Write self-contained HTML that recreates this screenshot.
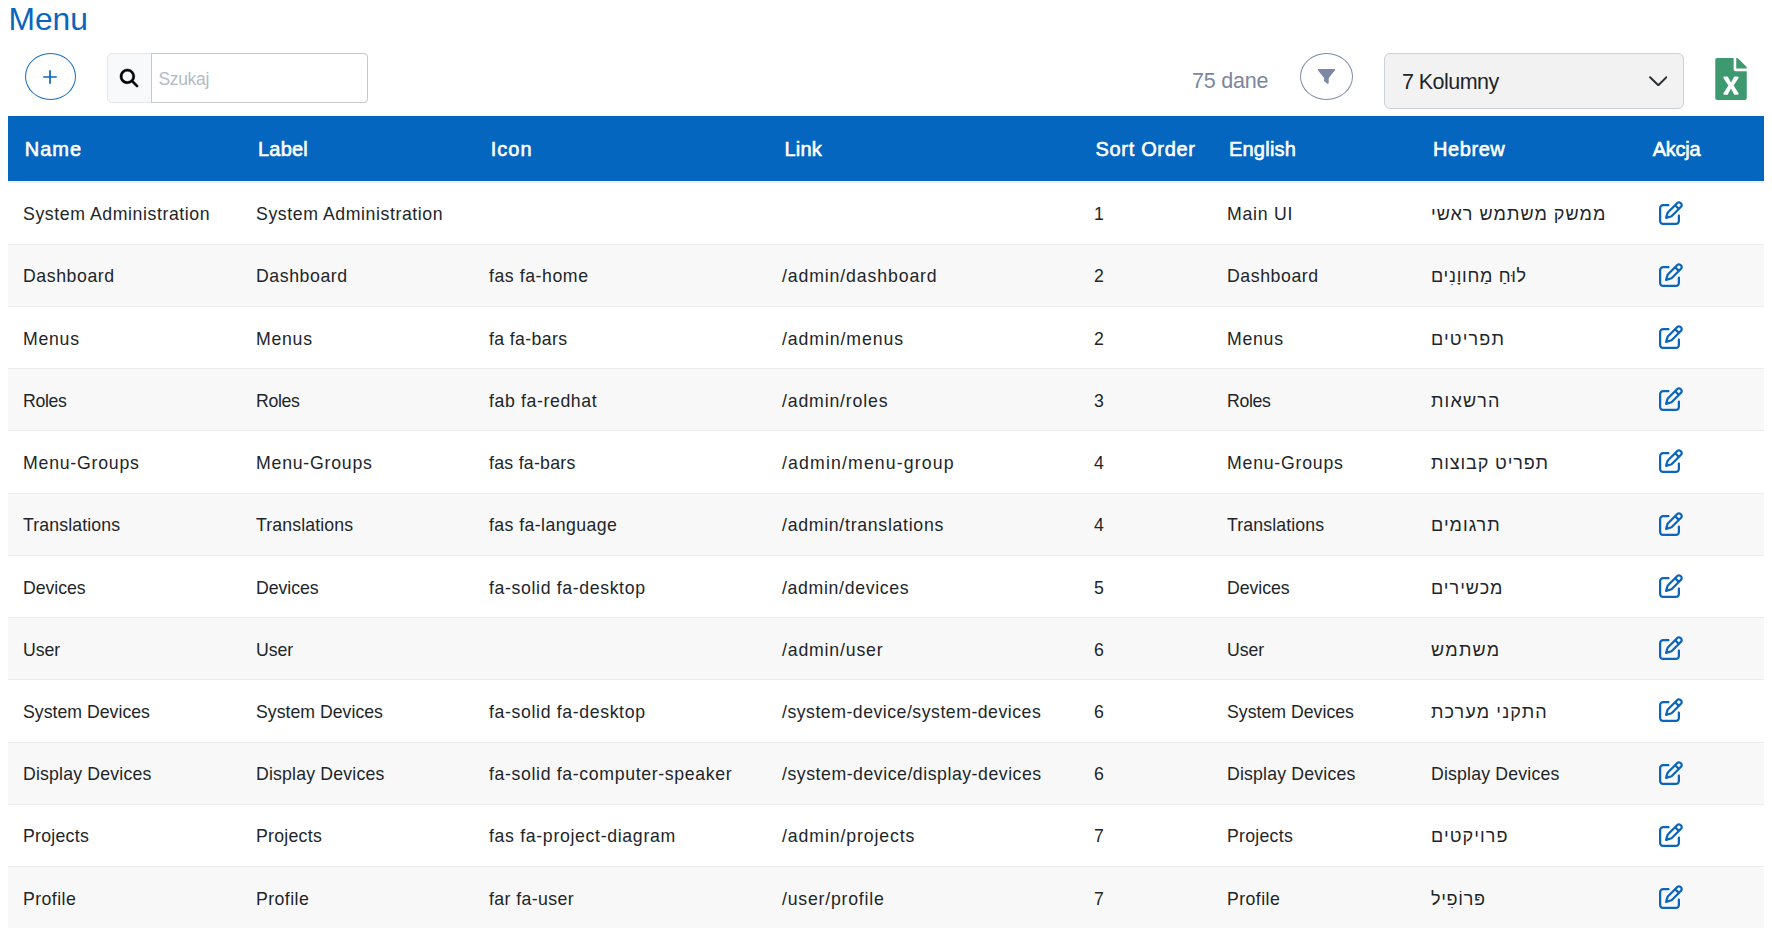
<!DOCTYPE html>
<html lang="pl">
<head>
<meta charset="utf-8">
<title>Menu</title>
<style>
*{box-sizing:border-box;margin:0;padding:0}
html,body{width:1772px;height:928px;overflow:hidden;background:#fff}
body{font-family:"Liberation Sans",sans-serif;color:#212529;position:relative}
.abs{position:absolute}
h1{position:absolute;left:8.400px;top:-0.700px;font-weight:400;font-size:31.800px;line-height:40px;color:#0a65bd;letter-spacing:0;white-space:nowrap;font-family:"Liberation Sans",sans-serif}
.addbtn{left:25px;top:53px;width:51px;height:47px;border:1.4px solid #1a6dc0;border-radius:50%;background:#fff}
.addbtn svg{position:absolute;left:17px;top:15.6px}
.sgrp{left:107px;top:53px;width:260.500px;height:50px;border:1px solid #e3e6ea;border-radius:5px;background:#f8f9fa}
.sgrp .inp{position:absolute;left:43px;top:-1px;width:217px;height:50px;border:1px solid #c7c8cb;border-radius:0 4px 4px 0;background:#fff}
.sgrp .ph{position:absolute;left:6.500px;top:14px;font-size:17.500px;line-height:22px;color:#b3bac8;white-space:nowrap;letter-spacing:-0.350px}
.sgrp svg{position:absolute;left:12.300px;top:14.800px}
.count{left:1192px;top:67px;font-size:21.500px;line-height:28px;color:#7d869c;white-space:nowrap;letter-spacing:-0.200px}
.fbtn{left:1300px;top:53px;width:53px;height:47px;border:1.300px solid #7f8aa6;border-radius:50%;background:#fff}
.fbtn svg{position:absolute;left:16.500px;top:14.200px}
.sel{left:1384px;top:53px;width:300px;height:55.800px;border:1px solid #ccd0d8;border-radius:6px;background:#f2f2f2}
.sel .t{position:absolute;left:17px;top:14.200px;font-size:21.500px;line-height:28px;color:#212529;white-space:nowrap;letter-spacing:-0.550px}
.sel svg{position:absolute;left:263.500px;top:21.800px}
.xls{left:1715.300px;top:58px}
table{position:absolute;left:8px;top:116px;width:1756px;border-collapse:collapse;table-layout:fixed}
th{height:65px;background:#0466be;color:#fff;font-family:"Liberation Sans",sans-serif;font-weight:400;-webkit-text-stroke:0.600px #fff;font-size:20px;line-height:24px;text-align:left;padding:0 0 0 16.500px;white-space:nowrap;vertical-align:middle;letter-spacing:-0.300px}
th span{position:relative;top:0.500px}
td{height:62.250px;padding:0 0 0 15px;font-family:"Liberation Sans",sans-serif;font-size:17.700px;line-height:22px;font-weight:400;color:#212529;letter-spacing:0.780px;text-align:left;white-space:nowrap;vertical-align:middle;border-bottom:1px solid #ececec;overflow:visible}
tbody tr:first-child td{height:63px;padding-top:2px}
td span{position:relative;top:0.500px}
tr.d1 td span{top:1.500px}
tbody tr:nth-child(even) td{background:#f8f8f8}
td.act{padding-left:22px}
td.act svg{display:block;position:relative;top:-0.500px}
.he{direction:rtl;unicode-bidi:embed;display:inline-block;font-size:18px}
</style>
</head>
<body>
<h1>Menu</h1>

<div class="abs addbtn">
<svg width="14" height="14" viewBox="0 0 14 14"><path d="M7 0.900V13.100M0.900 7H13.100" stroke="#0a65bd" stroke-width="1.700" stroke-linecap="round" fill="none"/></svg>
</div>

<div class="abs sgrp">
<svg width="18.200" height="18.200" viewBox="0 0 512 512" style="overflow:visible"><path fill="#000" stroke="#000" stroke-width="12" d="M416 208c0 45.900-14.900 88.300-40 122.700L502.600 457.400c12.500 12.500 12.500 32.800 0 45.300s-32.800 12.500-45.300 0L330.700 376c-34.400 25.200-76.800 40-122.700 40C93.100 416 0 322.900 0 208S93.100 0 208 0S416 93.100 416 208zM208 352a144 144 0 1 0 0-288 144 144 0 1 0 0 288z"/></svg>
<div class="inp"><div class="ph">Szukaj</div></div>
</div>

<div class="abs count">75 dane</div>

<div class="abs fbtn"></div>
<svg class="abs" style="left:1310px;top:62px" width="32" height="28" viewBox="1310 62 32 28"><path fill="#7c88a6" d="M1318.900 69.100H1334Q1335.900 69.100 1334.800 70.500L1328.700 78V83Q1328.700 84 1327.600 83.700L1326.600 83.300L1324.500 81.500Q1324.100 81.200 1324.100 80.700V78L1318.100 70.500Q1317 69.100 1318.900 69.100Z"/></svg>

<div class="abs sel">
<div class="t">7 Kolumny</div>
<svg width="18.600" height="10.600" viewBox="0 0 18.600 10.600"><path d="M1.100 1.200L9.300 9.300L17.500 1.200" stroke="#2b3035" stroke-width="2" fill="none" stroke-linecap="round" stroke-linejoin="round"/></svg>
</div>

<svg class="abs xls" width="32" height="42" viewBox="0 0 384 512"><path fill="#3d9970" d="M224 136V0H24C10.700 0 0 10.700 0 24v464c0 13.300 10.700 24 24 24h336c13.300 0 24-10.700 24-24V160H248c-13.200 0-24-10.800-24-24zm60.100 106.500L224 336l60.100 93.500c5.100 8-.6 18.500-10.100 18.500h-34.900c-4.400 0-8.500-2.400-10.600-6.300C208.900 405.500 192 373 192 373c-6.400 14.800-10 20-36.600 68.800-2.100 3.900-6.100 6.300-10.500 6.300H110c-9.500 0-15.200-10.500-10.100-18.500l60.300-93.500-60.300-93.500c-5.200-8 .6-18.500 10.100-18.500h34.800c4.400 0 8.500 2.400 10.600 6.300 26.100 48.800 20 33.600 36.600 68.500 0 0 6.100-11.700 36.600-68.500 2.100-3.900 6.200-6.300 10.600-6.300H274c9.500-.1 15.200 10.400 10.100 18.400zM384 121.900v6.100H256V0h6.100c6.400 0 12.500 2.500 17 7l97.900 98c4.500 4.500 7 10.600 7 16.900z"/></svg>

<div class="abs" style="left:8px;top:182px;width:1756px;height:1px;background:#f0f0f0"></div>
<table>
<colgroup><col style="width:233px"><col style="width:233px"><col style="width:293px"><col style="width:312px"><col style="width:133px"><col style="width:204px"><col style="width:221px"><col style="width:127px"></colgroup>
<thead><tr><th><span style="letter-spacing:0.97px;left:0.3px">Name</span></th><th><span style="letter-spacing:0.2px;left:0.5px">Label</span></th><th><span style="letter-spacing:1px;left:0.3px">Icon</span></th><th><span style="letter-spacing:0.17px;left:1px">Link</span></th><th><span style="letter-spacing:0.68px">Sort Order</span></th><th><span style="letter-spacing:0.25px;left:0.4px">English</span></th><th><span style="letter-spacing:0.58px;left:0.5px">Hebrew</span></th><th><span style="letter-spacing:-0.3px;left:-0.7px">Akcja</span></th></tr></thead>
<tbody id="tb">
<tr><td><span style="letter-spacing:0.580px">System Administration</span></td><td><span style="letter-spacing:0.580px">System Administration</span></td><td></td><td></td><td><span>1</span></td><td><span style="letter-spacing:0.747px">Main UI</span></td><td><span class="he" style="letter-spacing:1.036px">ממשק משתמש ראשי</span></td><td class="act"><svg width="24" height="24" viewBox="0 0 512 512"><path fill="#0a65bd" d="M441 58.900L453.100 71c9.400 9.400 9.400 24.600 0 33.900L424 134.100 377.900 88 407 58.900c9.400-9.400 24.600-9.400 33.900 0zM209.800 256.200L344 121.900 390.100 168 255.800 302.200c-2.900 2.900-6.500 5-10.400 6.100l-58.500 16.700 16.700-58.500c1.100-3.900 3.200-7.500 6.100-10.400zM373.100 25L175.800 222.200c-8.700 8.700-15 19.400-18.300 31.100l-28.600 100c-2.400 8.400-.1 17.400 6.100 23.600s15.200 8.500 23.600 6.100l100-28.600c11.800-3.400 22.500-9.700 31.100-18.300L487 138.900c28.100-28.100 28.100-73.700 0-101.800L474.900 25C446.800-3.100 401.200-3.100 373.100 25zM88 64C39.400 64 0 103.400 0 152V424c0 48.600 39.400 88 88 88H360c48.600 0 88-39.400 88-88V312c0-13.300-10.700-24-24-24s-24 10.700-24 24V424c0 22.100-17.900 40-40 40H88c-22.100 0-40-17.900-40-40V152c0-22.100 17.900-40 40-40H200c13.300 0 24-10.700 24-24s-10.700-24-24-24H88z"/></svg></td></tr>
<tr><td><span style="letter-spacing:0.580px">Dashboard</span></td><td><span style="letter-spacing:0.580px">Dashboard</span></td><td><span style="letter-spacing:0.560px">fas fa-home</span></td><td><span style="letter-spacing:0.874px">/admin/dashboard</span></td><td><span>2</span></td><td><span style="letter-spacing:0.580px">Dashboard</span></td><td><span class="he" style="letter-spacing:0.700px">לוּחַ מַחווָנִים</span></td><td class="act"><svg width="24" height="24" viewBox="0 0 512 512"><path fill="#0a65bd" d="M441 58.900L453.100 71c9.400 9.400 9.400 24.600 0 33.900L424 134.100 377.900 88 407 58.900c9.400-9.400 24.600-9.400 33.900 0zM209.800 256.200L344 121.900 390.100 168 255.800 302.200c-2.900 2.900-6.500 5-10.400 6.100l-58.500 16.700 16.700-58.500c1.100-3.900 3.200-7.500 6.100-10.400zM373.100 25L175.800 222.200c-8.700 8.700-15 19.400-18.300 31.100l-28.600 100c-2.400 8.400-.1 17.400 6.100 23.600s15.200 8.500 23.600 6.100l100-28.600c11.800-3.400 22.500-9.700 31.100-18.300L487 138.900c28.100-28.100 28.100-73.700 0-101.800L474.900 25C446.800-3.100 401.200-3.100 373.100 25zM88 64C39.400 64 0 103.400 0 152V424c0 48.600 39.400 88 88 88H360c48.600 0 88-39.400 88-88V312c0-13.300-10.700-24-24-24s-24 10.700-24 24V424c0 22.100-17.900 40-40 40H88c-22.100 0-40-17.900-40-40V152c0-22.100 17.900-40 40-40H200c13.300 0 24-10.700 24-24s-10.700-24-24-24H88z"/></svg></td></tr>
<tr class="d1"><td><span style="letter-spacing:0.730px">Menus</span></td><td><span style="letter-spacing:0.730px">Menus</span></td><td><span style="letter-spacing:0.381px">fa fa-bars</span></td><td><span style="letter-spacing:0.908px">/admin/menus</span></td><td><span>2</span></td><td><span style="letter-spacing:0.730px">Menus</span></td><td><span class="he" style="letter-spacing:1.147px">תפריטים</span></td><td class="act"><svg width="24" height="24" viewBox="0 0 512 512"><path fill="#0a65bd" d="M441 58.900L453.100 71c9.400 9.400 9.400 24.600 0 33.900L424 134.100 377.900 88 407 58.900c9.400-9.400 24.600-9.400 33.900 0zM209.800 256.200L344 121.900 390.100 168 255.800 302.200c-2.900 2.900-6.500 5-10.400 6.100l-58.500 16.700 16.700-58.500c1.100-3.900 3.200-7.500 6.100-10.400zM373.100 25L175.800 222.200c-8.700 8.700-15 19.400-18.300 31.100l-28.600 100c-2.400 8.400-.1 17.400 6.100 23.600s15.200 8.500 23.600 6.100l100-28.600c11.800-3.400 22.500-9.700 31.100-18.300L487 138.900c28.100-28.100 28.100-73.700 0-101.800L474.900 25C446.800-3.100 401.200-3.100 373.100 25zM88 64C39.400 64 0 103.400 0 152V424c0 48.600 39.400 88 88 88H360c48.600 0 88-39.400 88-88V312c0-13.300-10.700-24-24-24s-24 10.700-24 24V424c0 22.100-17.900 40-40 40H88c-22.100 0-40-17.900-40-40V152c0-22.100 17.900-40 40-40H200c13.300 0 24-10.700 24-24s-10.700-24-24-24H88z"/></svg></td></tr>
<tr class="d1"><td><span style="letter-spacing:-0.320px">Roles</span></td><td><span style="letter-spacing:-0.320px">Roles</span></td><td><span style="letter-spacing:0.614px">fab fa-redhat</span></td><td><span style="letter-spacing:0.836px">/admin/roles</span></td><td><span>3</span></td><td><span style="letter-spacing:-0.320px">Roles</span></td><td><span class="he" style="letter-spacing:1.180px">הרשאות</span></td><td class="act"><svg width="24" height="24" viewBox="0 0 512 512"><path fill="#0a65bd" d="M441 58.900L453.100 71c9.400 9.400 9.400 24.600 0 33.900L424 134.100 377.900 88 407 58.900c9.400-9.400 24.600-9.400 33.900 0zM209.800 256.200L344 121.900 390.100 168 255.800 302.200c-2.900 2.900-6.500 5-10.400 6.100l-58.500 16.700 16.700-58.500c1.100-3.900 3.200-7.500 6.100-10.400zM373.100 25L175.800 222.200c-8.700 8.700-15 19.400-18.300 31.100l-28.600 100c-2.400 8.400-.1 17.400 6.100 23.600s15.200 8.500 23.600 6.100l100-28.600c11.800-3.400 22.500-9.700 31.100-18.300L487 138.900c28.100-28.100 28.100-73.700 0-101.800L474.900 25C446.800-3.100 401.200-3.100 373.100 25zM88 64C39.400 64 0 103.400 0 152V424c0 48.600 39.400 88 88 88H360c48.600 0 88-39.400 88-88V312c0-13.300-10.700-24-24-24s-24 10.700-24 24V424c0 22.100-17.900 40-40 40H88c-22.100 0-40-17.900-40-40V152c0-22.100 17.900-40 40-40H200c13.300 0 24-10.700 24-24s-10.700-24-24-24H88z"/></svg></td></tr>
<tr class="d1"><td><span style="letter-spacing:0.780px">Menu-Groups</span></td><td><span style="letter-spacing:0.780px">Menu-Groups</span></td><td><span style="letter-spacing:0.280px">fas fa-bars</span></td><td><span style="letter-spacing:1.143px">/admin/menu-group</span></td><td><span>4</span></td><td><span style="letter-spacing:0.780px">Menu-Groups</span></td><td><span class="he" style="letter-spacing:0.871px">תפריט קבוצות</span></td><td class="act"><svg width="24" height="24" viewBox="0 0 512 512"><path fill="#0a65bd" d="M441 58.900L453.100 71c9.400 9.400 9.400 24.600 0 33.900L424 134.100 377.900 88 407 58.900c9.400-9.400 24.600-9.400 33.900 0zM209.800 256.200L344 121.900 390.100 168 255.800 302.200c-2.900 2.900-6.500 5-10.400 6.100l-58.500 16.700 16.700-58.500c1.100-3.900 3.200-7.500 6.100-10.400zM373.100 25L175.800 222.200c-8.700 8.700-15 19.400-18.300 31.100l-28.600 100c-2.400 8.400-.1 17.400 6.100 23.600s15.200 8.500 23.600 6.100l100-28.600c11.800-3.400 22.500-9.700 31.100-18.300L487 138.900c28.100-28.100 28.100-73.700 0-101.800L474.900 25C446.800-3.100 401.200-3.100 373.100 25zM88 64C39.400 64 0 103.400 0 152V424c0 48.600 39.400 88 88 88H360c48.600 0 88-39.400 88-88V312c0-13.300-10.700-24-24-24s-24 10.700-24 24V424c0 22.100-17.900 40-40 40H88c-22.100 0-40-17.900-40-40V152c0-22.100 17.900-40 40-40H200c13.300 0 24-10.700 24-24s-10.700-24-24-24H88z"/></svg></td></tr>
<tr><td><span style="letter-spacing:0.124px">Translations</span></td><td><span style="letter-spacing:0.124px">Translations</span></td><td><span style="letter-spacing:0.423px">fas fa-language</span></td><td><span style="letter-spacing:0.714px">/admin/translations</span></td><td><span>4</span></td><td><span style="letter-spacing:0.124px">Translations</span></td><td><span class="he" style="letter-spacing:1.048px">תרגומים</span></td><td class="act"><svg width="24" height="24" viewBox="0 0 512 512"><path fill="#0a65bd" d="M441 58.900L453.100 71c9.400 9.400 9.400 24.600 0 33.900L424 134.100 377.900 88 407 58.900c9.400-9.400 24.600-9.400 33.900 0zM209.800 256.200L344 121.900 390.100 168 255.800 302.200c-2.900 2.900-6.500 5-10.400 6.100l-58.500 16.700 16.700-58.500c1.100-3.900 3.200-7.500 6.100-10.400zM373.100 25L175.800 222.200c-8.700 8.700-15 19.400-18.300 31.100l-28.600 100c-2.400 8.400-.1 17.400 6.100 23.600s15.200 8.500 23.600 6.100l100-28.600c11.800-3.400 22.500-9.700 31.100-18.300L487 138.900c28.100-28.100 28.100-73.700 0-101.800L474.900 25C446.800-3.100 401.200-3.100 373.100 25zM88 64C39.400 64 0 103.400 0 152V424c0 48.600 39.400 88 88 88H360c48.600 0 88-39.400 88-88V312c0-13.300-10.700-24-24-24s-24 10.700-24 24V424c0 22.100-17.900 40-40 40H88c-22.100 0-40-17.900-40-40V152c0-22.100 17.900-40 40-40H200c13.300 0 24-10.700 24-24s-10.700-24-24-24H88z"/></svg></td></tr>
<tr class="d1"><td><span style="letter-spacing:-0.053px">Devices</span></td><td><span style="letter-spacing:-0.053px">Devices</span></td><td><span style="letter-spacing:0.636px">fa-solid fa-desktop</span></td><td><span style="letter-spacing:0.671px">/admin/devices</span></td><td><span>5</span></td><td><span style="letter-spacing:-0.053px">Devices</span></td><td><span class="he" style="letter-spacing:1.012px">מכשירים</span></td><td class="act"><svg width="24" height="24" viewBox="0 0 512 512"><path fill="#0a65bd" d="M441 58.900L453.100 71c9.400 9.400 9.400 24.600 0 33.900L424 134.100 377.900 88 407 58.900c9.400-9.400 24.600-9.400 33.900 0zM209.800 256.200L344 121.900 390.100 168 255.800 302.200c-2.900 2.900-6.500 5-10.400 6.100l-58.500 16.700 16.700-58.500c1.100-3.900 3.200-7.500 6.100-10.400zM373.100 25L175.800 222.200c-8.700 8.700-15 19.400-18.300 31.100l-28.600 100c-2.400 8.400-.1 17.400 6.100 23.600s15.200 8.500 23.600 6.100l100-28.600c11.800-3.400 22.500-9.700 31.100-18.300L487 138.900c28.100-28.100 28.100-73.700 0-101.800L474.900 25C446.800-3.100 401.200-3.100 373.100 25zM88 64C39.400 64 0 103.400 0 152V424c0 48.600 39.400 88 88 88H360c48.600 0 88-39.400 88-88V312c0-13.300-10.700-24-24-24s-24 10.700-24 24V424c0 22.100-17.900 40-40 40H88c-22.100 0-40-17.900-40-40V152c0-22.100 17.900-40 40-40H200c13.300 0 24-10.700 24-24s-10.700-24-24-24H88z"/></svg></td></tr>
<tr class="d1"><td><span style="letter-spacing:-0.087px">User</span></td><td><span style="letter-spacing:-0.087px">User</span></td><td></td><td><span style="letter-spacing:0.820px">/admin/user</span></td><td><span>6</span></td><td><span style="letter-spacing:-0.087px">User</span></td><td><span class="he" style="letter-spacing:1.280px">משתמש</span></td><td class="act"><svg width="24" height="24" viewBox="0 0 512 512"><path fill="#0a65bd" d="M441 58.900L453.100 71c9.400 9.400 9.400 24.600 0 33.900L424 134.100 377.900 88 407 58.900c9.400-9.400 24.600-9.400 33.900 0zM209.800 256.200L344 121.900 390.100 168 255.800 302.200c-2.900 2.900-6.500 5-10.400 6.100l-58.500 16.700 16.700-58.500c1.100-3.900 3.200-7.500 6.100-10.400zM373.100 25L175.800 222.200c-8.700 8.700-15 19.400-18.300 31.100l-28.600 100c-2.400 8.400-.1 17.400 6.100 23.600s15.200 8.500 23.600 6.100l100-28.600c11.800-3.400 22.500-9.700 31.100-18.300L487 138.900c28.100-28.100 28.100-73.700 0-101.800L474.900 25C446.800-3.100 401.200-3.100 373.100 25zM88 64C39.400 64 0 103.400 0 152V424c0 48.600 39.400 88 88 88H360c48.600 0 88-39.400 88-88V312c0-13.300-10.700-24-24-24s-24 10.700-24 24V424c0 22.100-17.900 40-40 40H88c-22.100 0-40-17.900-40-40V152c0-22.100 17.900-40 40-40H200c13.300 0 24-10.700 24-24s-10.700-24-24-24H88z"/></svg></td></tr>
<tr class="d1"><td><span style="letter-spacing:0.011px">System Devices</span></td><td><span style="letter-spacing:0.011px">System Devices</span></td><td><span style="letter-spacing:0.636px">fa-solid fa-desktop</span></td><td><span style="letter-spacing:0.500px">/system-device/system-devices</span></td><td><span>6</span></td><td><span style="letter-spacing:0.011px">System Devices</span></td><td><span class="he" style="letter-spacing:1.120px">התקני מערכת</span></td><td class="act"><svg width="24" height="24" viewBox="0 0 512 512"><path fill="#0a65bd" d="M441 58.900L453.100 71c9.400 9.400 9.400 24.600 0 33.900L424 134.100 377.900 88 407 58.900c9.400-9.400 24.600-9.400 33.900 0zM209.800 256.200L344 121.900 390.100 168 255.800 302.200c-2.900 2.900-6.500 5-10.400 6.100l-58.500 16.700 16.700-58.500c1.100-3.900 3.200-7.500 6.100-10.400zM373.100 25L175.800 222.200c-8.700 8.700-15 19.400-18.300 31.100l-28.600 100c-2.400 8.400-.1 17.400 6.100 23.600s15.200 8.500 23.600 6.100l100-28.600c11.800-3.400 22.500-9.700 31.100-18.300L487 138.900c28.100-28.100 28.100-73.700 0-101.800L474.900 25C446.800-3.100 401.200-3.100 373.100 25zM88 64C39.400 64 0 103.400 0 152V424c0 48.600 39.400 88 88 88H360c48.600 0 88-39.400 88-88V312c0-13.300-10.700-24-24-24s-24 10.700-24 24V424c0 22.100-17.900 40-40 40H88c-22.100 0-40-17.900-40-40V152c0-22.100 17.900-40 40-40H200c13.300 0 24-10.700 24-24s-10.700-24-24-24H88z"/></svg></td></tr>
<tr><td><span style="letter-spacing:0.180px">Display Devices</span></td><td><span style="letter-spacing:0.180px">Display Devices</span></td><td><span style="letter-spacing:0.645px">fa-solid fa-computer-speaker</span></td><td><span style="letter-spacing:0.532px">/system-device/display-devices</span></td><td><span>6</span></td><td><span style="letter-spacing:0.180px">Display Devices</span></td><td><span style="letter-spacing:0.180px">Display Devices</span></td><td class="act"><svg width="24" height="24" viewBox="0 0 512 512"><path fill="#0a65bd" d="M441 58.900L453.100 71c9.400 9.400 9.400 24.600 0 33.900L424 134.100 377.900 88 407 58.900c9.400-9.400 24.600-9.400 33.900 0zM209.800 256.200L344 121.900 390.100 168 255.800 302.200c-2.900 2.900-6.500 5-10.400 6.100l-58.500 16.700 16.700-58.500c1.100-3.900 3.200-7.500 6.100-10.400zM373.100 25L175.800 222.200c-8.700 8.700-15 19.400-18.300 31.100l-28.600 100c-2.400 8.400-.1 17.400 6.100 23.600s15.200 8.500 23.600 6.100l100-28.600c11.800-3.400 22.500-9.700 31.100-18.300L487 138.900c28.100-28.100 28.100-73.700 0-101.800L474.900 25C446.800-3.100 401.200-3.100 373.100 25zM88 64C39.400 64 0 103.400 0 152V424c0 48.600 39.400 88 88 88H360c48.600 0 88-39.400 88-88V312c0-13.300-10.700-24-24-24s-24 10.700-24 24V424c0 22.100-17.900 40-40 40H88c-22.100 0-40-17.900-40-40V152c0-22.100 17.900-40 40-40H200c13.300 0 24-10.700 24-24s-10.700-24-24-24H88z"/></svg></td></tr>
<tr><td><span style="letter-spacing:0.265px">Projects</span></td><td><span style="letter-spacing:0.265px">Projects</span></td><td><span style="letter-spacing:0.674px">fas fa-project-diagram</span></td><td><span style="letter-spacing:0.893px">/admin/projects</span></td><td><span>7</span></td><td><span style="letter-spacing:0.265px">Projects</span></td><td><span class="he" style="letter-spacing:1.096px">פרויקטים</span></td><td class="act"><svg width="24" height="24" viewBox="0 0 512 512"><path fill="#0a65bd" d="M441 58.900L453.100 71c9.400 9.400 9.400 24.600 0 33.900L424 134.100 377.900 88 407 58.900c9.400-9.400 24.600-9.400 33.900 0zM209.800 256.200L344 121.900 390.100 168 255.800 302.200c-2.900 2.900-6.500 5-10.400 6.100l-58.500 16.700 16.700-58.500c1.100-3.900 3.200-7.500 6.100-10.400zM373.100 25L175.800 222.200c-8.700 8.700-15 19.400-18.300 31.100l-28.600 100c-2.400 8.400-.1 17.400 6.100 23.600s15.200 8.500 23.600 6.100l100-28.600c11.800-3.400 22.500-9.700 31.100-18.300L487 138.900c28.100-28.100 28.100-73.700 0-101.800L474.900 25C446.800-3.100 401.200-3.100 373.100 25zM88 64C39.400 64 0 103.400 0 152V424c0 48.600 39.400 88 88 88H360c48.600 0 88-39.400 88-88V312c0-13.300-10.700-24-24-24s-24 10.700-24 24V424c0 22.100-17.900 40-40 40H88c-22.100 0-40-17.900-40-40V152c0-22.100 17.900-40 40-40H200c13.300 0 24-10.700 24-24s-10.700-24-24-24H88z"/></svg></td></tr>
<tr class="d1"><td><span style="letter-spacing:0.447px">Profile</span></td><td><span style="letter-spacing:0.447px">Profile</span></td><td><span style="letter-spacing:0.400px">far fa-user</span></td><td><span style="letter-spacing:0.780px">/user/profile</span></td><td><span>7</span></td><td><span style="letter-spacing:0.447px">Profile</span></td><td><span class="he" style="letter-spacing:0.700px">פּרוֹפִיל</span></td><td class="act"><svg width="24" height="24" viewBox="0 0 512 512"><path fill="#0a65bd" d="M441 58.900L453.100 71c9.400 9.400 9.400 24.600 0 33.900L424 134.100 377.900 88 407 58.900c9.400-9.400 24.600-9.400 33.900 0zM209.800 256.200L344 121.900 390.100 168 255.800 302.200c-2.900 2.900-6.500 5-10.400 6.100l-58.500 16.700 16.700-58.500c1.100-3.900 3.200-7.500 6.100-10.400zM373.100 25L175.800 222.200c-8.700 8.700-15 19.400-18.300 31.100l-28.600 100c-2.400 8.400-.1 17.400 6.100 23.600s15.200 8.500 23.600 6.100l100-28.600c11.800-3.400 22.500-9.700 31.100-18.300L487 138.900c28.100-28.100 28.100-73.700 0-101.800L474.900 25C446.800-3.100 401.200-3.100 373.100 25zM88 64C39.400 64 0 103.400 0 152V424c0 48.600 39.400 88 88 88H360c48.600 0 88-39.400 88-88V312c0-13.300-10.700-24-24-24s-24 10.700-24 24V424c0 22.100-17.900 40-40 40H88c-22.100 0-40-17.900-40-40V152c0-22.100 17.900-40 40-40H200c13.300 0 24-10.700 24-24s-10.700-24-24-24H88z"/></svg></td></tr>
</tbody>
</table>
</body>
</html>
